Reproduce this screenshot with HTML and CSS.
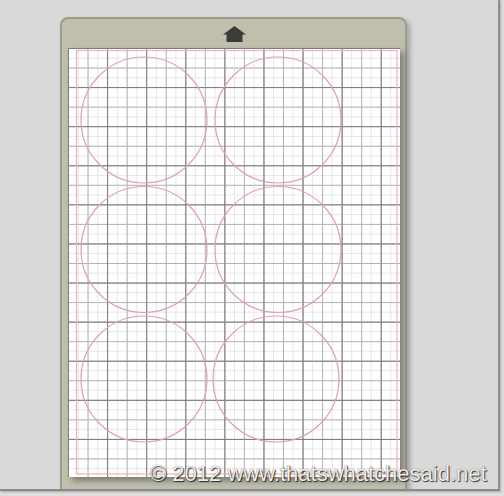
FILE: index.html
```html
<!DOCTYPE html>
<html>
<head>
<meta charset="utf-8">
<link rel="stylesheet" href="styles.css">
</head>
<body>
<div class="frame">
  <div class="mat">
    <div class="mat-head">
      <svg class="arrow" width="23" height="16" viewBox="0 0 23 16"><path d="M11.5 0 L23 8.5 L19.5 8.5 L19.5 16 L3.5 16 L3.5 8.5 L0 8.5 Z" fill="#3b3b3b"/></svg>
    </div>
    <div class="paper">
      <svg class="cuts" width="332" height="429" viewBox="0 0 332 429">
        <rect x="8.5" y="2.5" width="320.5" height="423.5" fill="none" stroke="#ebb3bb" stroke-width="1.2"/>
        <g fill="none" stroke="#dca3ad" stroke-width="1.2">
          <circle cx="76" cy="72" r="63"/>
          <circle cx="210" cy="72" r="63"/>
          <circle cx="76" cy="201.5" r="63"/>
          <circle cx="210" cy="201.5" r="63"/>
          <circle cx="76" cy="331" r="63"/>
          <circle cx="208" cy="331" r="63"/>
        </g>
      </svg>
    </div>
  </div>
  <div class="watermark">© 2012 www.thatswhatchesaid.net</div>
</div>
</body>
</html>
```
FILE: styles.css
```css
html, body {
  margin: 0;
  padding: 0;
}
body {
  width: 504px;
  height: 496px;
  background: #dedede;
  overflow: hidden;
}
.frame {
  position: relative;
  width: 498px;
  height: 489px;
  background: #d9d9d9;
  border-right: 2px solid #8f8f8f;
  border-bottom: 2px solid #8a8a8a;
  overflow: hidden;
  box-shadow: 1px 1px 2px rgba(0,0,0,0.25);
}
.mat {
  margin: 17px 0 0 60px;
  width: 347px;
  height: 480px;
  box-sizing: border-box;
  background: #c0bfae;
  border: 2px solid #9c9b8d;
  border-radius: 8px;
  box-shadow: 3px 3px 5px rgba(0,0,0,0.25);
}
.mat-head {
  height: 29px;
  box-sizing: border-box;
  padding: 7px 0 0 0;
  display: flex;
  justify-content: center;
}
.arrow {
  display: block;
  margin-left: 1px;
}
.paper {
  margin-left: 6px;
  width: 332px;
  height: 429px;
  background-color: #fff;
  background-image:
    linear-gradient(to right, #7c7c7c 1px, transparent 1px),
    linear-gradient(to bottom, #7c7c7c 1px, transparent 1px),
    linear-gradient(to right, #b4b4b4 1px, transparent 1px),
    linear-gradient(to bottom, #b4b4b4 1px, transparent 1px),
    linear-gradient(to right, #e6e6e6 1px, transparent 1px),
    linear-gradient(to bottom, #e6e6e6 1px, transparent 1px);
  background-size:
    39.1px 39.1px, 39.1px 39.1px,
    19.55px 19.55px, 19.55px 19.55px,
    9.775px 9.775px, 9.775px 9.775px;
  box-shadow: 4px 4px 6px rgba(0,0,0,0.35);
}
.cuts {
  display: block;
}
.watermark {
  position: absolute;
  left: 150px;
  top: 461px;
  font-family: "Liberation Sans", Arial, sans-serif;
  font-size: 22px;
  color: #eeeeee;
  white-space: nowrap;
  text-shadow: 1px 1px 1px rgba(0,0,0,0.75), 0 0 1px rgba(0,0,0,0.6);
}
```
